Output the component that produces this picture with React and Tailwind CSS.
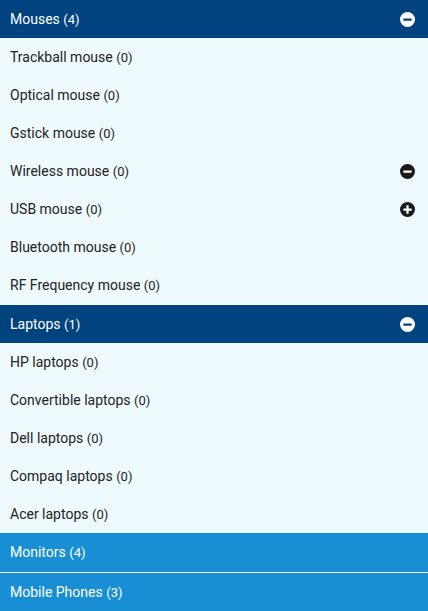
import React from "react";

const Minus = ({ bg, fg }) => (
  <svg width="15" height="15" viewBox="0 0 16 16">
    <circle cx="8" cy="8" r="8" fill={bg} />
    <rect x="3.5" y="6.8" width="9" height="2.4" rx="0.6" fill={fg} />
  </svg>
);
const Plus = ({ bg, fg }) => (
  <svg width="15" height="15" viewBox="0 0 16 16">
    <circle cx="8" cy="8" r="8" fill={bg} />
    <rect x="3.5" y="6.8" width="9" height="2.4" rx="0.6" fill={fg} />
    <rect x="6.8" y="3.5" width="2.4" height="9" rx="0.6" fill={fg} />
  </svg>
);

const Header = ({ name, count, dark, icon, cls = "" }) => (
  <div
    className={`flex items-center justify-between pl-[10px] pr-[13px] text-white text-[14px] ${
      dark ? "bg-[#00437f]" : "bg-[#188fd4]"
    } ${cls}`}
  >
    <span>
      {name} <span className="text-[13px]">({count})</span>
    </span>
    {icon}
  </div>
);

const Item = ({ name, icon, cls = "h-[38px]" }) => (
  <div className={`flex items-center justify-between pl-[10px] pr-[13px] text-[14px] text-[#222] ${cls}`}>
    <span>
      {name} <span className="text-[13px]">(0)</span>
    </span>
    {icon}
  </div>
);

export default function App() {
  return (
    <div className="w-[428px] h-[611px] bg-[#effaff] overflow-hidden" style={{ fontFamily: "Roboto, sans-serif" }}>
      <Header name="Mouses" count={4} dark cls="h-[38px]" icon={<Minus bg="#fff" fg="#00437f" />} />
      <Item name="Trackball mouse" />
      <Item name="Optical mouse" />
      <Item name="Gstick mouse" />
      <Item name="Wireless mouse" icon={<Minus bg="#1a1a1a" fg="#fff" />} />
      <Item name="USB mouse" icon={<Plus bg="#1a1a1a" fg="#fff" />} />
      <Item name="Bluetooth mouse" />
      <Item name="RF Frequency mouse" cls="h-[39px]" />
      <Header name="Laptops" count={1} dark cls="h-[38px]" icon={<Minus bg="#fff" fg="#00437f" />} />
      <Item name="HP laptops" />
      <Item name="Convertible laptops" />
      <Item name="Dell laptops" />
      <Item name="Compaq laptops" />
      <Item name="Acer laptops" />
      <Header name="Monitors" count={4} cls="h-[40px] border-b border-white" />
      <Header name="Mobile Phones" count={3} cls="h-[39px]" />
    </div>
  );
}
